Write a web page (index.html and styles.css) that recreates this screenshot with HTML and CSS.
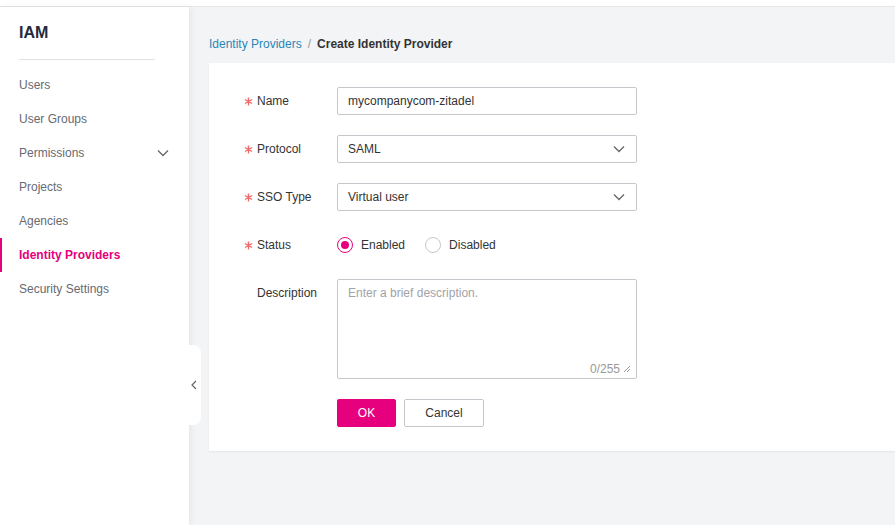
FILE: index.html
```html
<!DOCTYPE html>
<html lang="en">
<head>
<meta charset="utf-8">
<title>Create Identity Provider</title>
<link rel="stylesheet" href="styles.css">
</head>
<body>
<div class="topbar"></div>
<div class="layout">
  <aside class="sidebar">
    <div class="side-title">IAM</div>
    <div class="side-divider"></div>
    <nav class="menu">
      <div class="menu-item">Users</div>
      <div class="menu-item">User Groups</div>
      <div class="menu-item has-sub">Permissions
        <svg class="sub-arrow" width="12" height="8" viewBox="0 0 12 8"><path d="M1 1.5 L6 6.5 L11 1.5" fill="none" stroke="#666" stroke-width="1.3"/></svg>
      </div>
      <div class="menu-item">Projects</div>
      <div class="menu-item">Agencies</div>
      <div class="menu-item active">Identity Providers</div>
      <div class="menu-item">Security Settings</div>
    </nav>
  </aside>
  <div class="collapse-handle">
    <svg width="6" height="10" viewBox="0 0 6 10"><path d="M5 1 L1 5 L5 9" fill="none" stroke="#666" stroke-width="1.2"/></svg>
  </div>
  <main class="main">
    <div class="breadcrumb">
      <span class="crumb-link">Identity Providers</span>
      <span class="crumb-sep">/</span>
      <span class="crumb-current">Create Identity Provider</span>
    </div>
    <section class="card">
      <div class="form-row">
        <label class="form-label"><svg class="req" width="9" height="9" viewBox="0 0 9 9"><path d="M4.5 0.5 V8.5 M1 2.5 L8 6.5 M1 6.5 L8 2.5" stroke="#f26a6a" stroke-width="1.4"/></svg>Name</label>
        <div class="input">mycompanycom-zitadel</div>
      </div>
      <div class="form-row">
        <label class="form-label"><svg class="req" width="9" height="9" viewBox="0 0 9 9"><path d="M4.5 0.5 V8.5 M1 2.5 L8 6.5 M1 6.5 L8 2.5" stroke="#f26a6a" stroke-width="1.4"/></svg>Protocol</label>
        <div class="input select">SAML
          <svg class="sel-arrow" width="12" height="8" viewBox="0 0 12 8"><path d="M1 1.5 L6 6.5 L11 1.5" fill="none" stroke="#666" stroke-width="1.3"/></svg>
        </div>
      </div>
      <div class="form-row">
        <label class="form-label"><svg class="req" width="9" height="9" viewBox="0 0 9 9"><path d="M4.5 0.5 V8.5 M1 2.5 L8 6.5 M1 6.5 L8 2.5" stroke="#f26a6a" stroke-width="1.4"/></svg>SSO Type</label>
        <div class="input select">Virtual user
          <svg class="sel-arrow" width="12" height="8" viewBox="0 0 12 8"><path d="M1 1.5 L6 6.5 L11 1.5" fill="none" stroke="#666" stroke-width="1.3"/></svg>
        </div>
      </div>
      <div class="form-row">
        <label class="form-label"><svg class="req" width="9" height="9" viewBox="0 0 9 9"><path d="M4.5 0.5 V8.5 M1 2.5 L8 6.5 M1 6.5 L8 2.5" stroke="#f26a6a" stroke-width="1.4"/></svg>Status</label>
        <div class="radios">
          <span class="radio checked"><span class="radio-circle"></span>Enabled</span>
          <span class="radio"><span class="radio-circle"></span>Disabled</span>
        </div>
      </div>
      <div class="form-row top">
        <label class="form-label desc-label"><span class="req-blank"></span>Description</label>
        <div class="textarea">
          <span class="placeholder">Enter a brief description.</span>
          <span class="counter">0/255
            <svg width="8" height="8" viewBox="0 0 8 8"><path d="M1 7 L7 1 M4 7 L7 4" stroke="#999" stroke-width="1"/></svg>
          </span>
        </div>
      </div>
      <div class="form-row buttons">
        <button class="btn btn-primary">OK</button>
        <button class="btn btn-default">Cancel</button>
      </div>
    </section>
  </main>
</div>
</body>
</html>
```

FILE: styles.css
```css
* { box-sizing: border-box; }
html, body {
  margin: 0;
  padding: 0;
  width: 895px;
  height: 525px;
  overflow: hidden;
  font-family: "Liberation Sans", Arial, sans-serif;
  font-size: 12px;
  color: #333;
  background: #f3f4f6;
}
.topbar {
  height: 7px;
  background: #fff;
  border-bottom: 1px solid #e3e5e8;
}
.layout {
  display: flex;
  height: 518px;
  position: relative;
}
.sidebar {
  width: 189px;
  flex: none;
  background: #fff;
  box-shadow: 2px 0 6px rgba(0, 0, 0, 0.06);
  position: relative;
  z-index: 1;
}
.side-title {
  font-size: 16px;
  font-weight: bold;
  color: #252b3a;
  padding: 17px 0 0 19px;
  line-height: 18px;
}
.side-divider {
  margin: 17px 0 0 19px;
  width: 136px;
  height: 1px;
  background: #dfe1e6;
}
.menu { margin-top: 8px; }
.menu-item {
  height: 34px;
  line-height: 34px;
  padding-left: 19px;
  color: #666a73;
  position: relative;
  display: flex;
  align-items: center;
}
.menu-item.has-sub { justify-content: space-between; padding-right: 20px; }
.menu-item.active {
  color: #e6007e;
  font-weight: bold;
}
.menu-item.active::before {
  content: "";
  position: absolute;
  left: 0;
  top: 0;
  bottom: 0;
  width: 2px;
  background: #e6007e;
}
.collapse-handle {
  position: absolute;
  left: 189px;
  top: 338px;
  width: 12px;
  height: 80px;
  background: #fff;
  border-radius: 0 8px 8px 0;
  display: flex;
  align-items: center;
  justify-content: center;
  z-index: 2;
}
.collapse-handle svg { margin-left: -2px; }
.main {
  flex: 1;
  padding: 29px 0 0 20px;
}
.breadcrumb {
  line-height: 16px;
  height: 16px;
  display: flex;
  gap: 6px;
}
.crumb-link { color: #2a87b8; }
.crumb-sep { color: #999; }
.crumb-current { font-weight: bold; color: #333; }
.card {
  margin-top: 11px;
  background: #fff;
  box-shadow: 0 1px 2px rgba(0, 0, 0, 0.06);
  padding: 24px 0 24px 34px;
  display: flex;
  flex-direction: column;
  gap: 20px;
}
.form-row {
  display: flex;
  align-items: center;
  min-height: 28px;
}
.form-row.top { align-items: flex-start; }
.form-row.buttons { padding-left: 94px; gap: 8px; }
.form-label {
  width: 94px;
  flex: none;
  display: flex;
  align-items: center;
  color: #333;
}
.desc-label { padding-top: 7px; }
.req {
  flex: none;
  margin: 1px 4px 0 1px;
}
.req-blank { width: 14px; flex: none; }
.input {
  width: 300px;
  height: 28px;
  border: 1px solid #c4c7cc;
  border-radius: 2px;
  padding: 0 10px;
  display: flex;
  align-items: center;
  color: #333;
  position: relative;
}
.select { justify-content: space-between; }
.sel-arrow { margin-right: 1px; }
.radios { display: flex; align-items: center; gap: 20px; }
.radio {
  display: flex;
  align-items: center;
  gap: 8px;
  color: #333;
}
.radio-circle {
  width: 16px;
  height: 16px;
  border-radius: 50%;
  border: 1px solid #c4c7cc;
  display: inline-flex;
  align-items: center;
  justify-content: center;
}
.radio.checked .radio-circle { border-color: #e6007e; }
.radio.checked .radio-circle::after {
  content: "";
  width: 8px;
  height: 8px;
  border-radius: 50%;
  background: #e6007e;
}
.textarea {
  width: 300px;
  height: 100px;
  border: 1px solid #c4c7cc;
  border-radius: 2px;
  padding: 6px 10px;
  position: relative;
}
.placeholder { color: #a0a3a8; line-height: 14px; }
.counter {
  position: absolute;
  right: 5px;
  bottom: 2px;
  color: #999;
  display: flex;
  align-items: center;
  gap: 3px;
}
.btn {
  height: 28px;
  font-family: inherit;
  font-size: 12px;
  border-radius: 2px;
  padding: 0;
  cursor: pointer;
}
.btn-primary {
  width: 59px;
  background: #e6007e;
  border: 1px solid #e6007e;
  color: #fff;
}
.btn-default {
  width: 80px;
  background: #fff;
  border: 1px solid #c4c7cc;
  color: #333;
}
```
